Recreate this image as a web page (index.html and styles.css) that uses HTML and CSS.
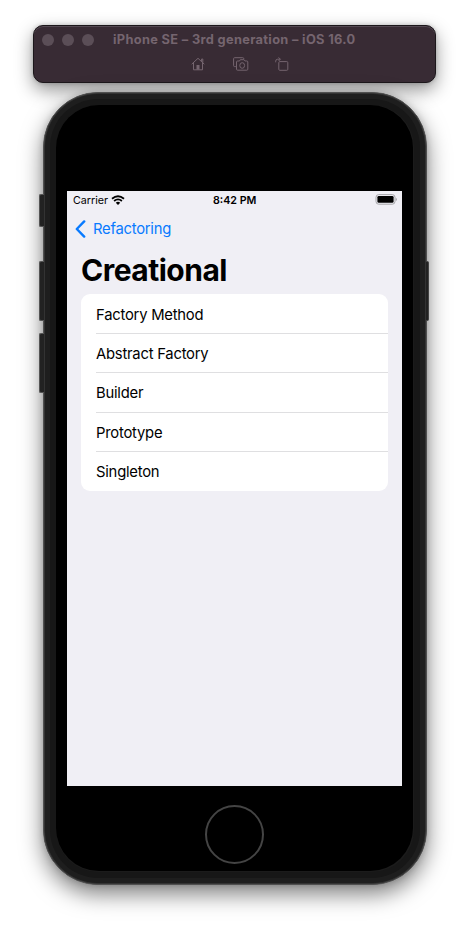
FILE: index.html
```html
<!DOCTYPE html>
<html lang="en">
<head>
<meta charset="utf-8">
<title>iPhone SE – 3rd generation – iOS 16.0</title>
<link rel="stylesheet" href="styles.css">
</head>
<body>
<header class="toolbar">
  <div class="titlebar">
    <div class="lights"><i></i><i></i><i></i></div>
    <span class="window-title">iPhone SE – 3rd generation – iOS 16.0</span>
  </div>
  <div class="actions">
    <svg width="14" height="14" viewBox="0 0 14 14"><path d="M.7 7.2 7 1.3l6.3 5.9M2.5 6v6.8h9V6M10.6 4.5V2h1.2v3.6"/><path class="solid" d="M5.5 8h3v4.7h-3z"/></svg>
    <svg width="16" height="14" viewBox="0 0 16 14"><path d="M2.8 9.6H1.6a1 1 0 0 1-1-1V1.7a1 1 0 0 1 1-1h8.2a1 1 0 0 1 1 1v.5"/><path d="M4.5 4h2l.8-1.3h3.8L12 4h1.8a1 1 0 0 1 1 1v7.2a1 1 0 0 1-1 1H4.5a1 1 0 0 1-1-1V5a1 1 0 0 1 1-1z"/><ellipse cx="9.2" cy="8.5" rx="2.4" ry="2.8"/></svg>
    <svg width="14" height="14" viewBox="0 0 14 14"><rect x="3.8" y="4.6" width="9" height="8.7" rx="1"/><path d="M.7 5.3V4.2a2 2 0 0 1 2-2h2.5M3.6.4l1.8 1.8-1.8 1.8"/></svg>
  </div>
</header>
<main class="phone">
  <b class="key mute"></b><b class="key up"></b><b class="key down"></b><b class="key power"></b>
  <div class="face">
    <section class="screen">
      <div class="status">
        <div class="carrier"><span>Carrier</span>
          <svg width="14" height="10" viewBox="0 0 14 10"><path d="M1 3.7q6-5 12 0M3.1 6q3.9-3.2 7.8 0"/><path class="dot" d="M4.8 7.7q2.2-1.8 4.4 0L7 9.9z"/></svg>
        </div>
        <span class="time">8:42 PM</span>
        <svg class="battery" width="22" height="11" viewBox="0 0 22 11"><rect class="shell" x="1" y=".6" width="19" height="9.6" rx="2.7"/><rect x="2.4" y="2" width="16.2" height="6.8" rx="1.3"/><path class="cap" d="M20.8 3.8q1.1.5 1.1 1.6t-1.1 1.6z"/></svg>
      </div>
      <nav class="back"><svg width="11" height="18" viewBox="0 0 11 18"><path d="M9.2 1.4 1.8 9l7.4 7.6"/></svg><span>Refactoring</span></nav>
      <h1>Creational</h1>
      <ul class="list">
        <li>Factory Method</li>
        <li>Abstract Factory</li>
        <li>Builder</li>
        <li>Prototype</li>
        <li>Singleton</li>
      </ul>
    </section>
    <div class="home"></div>
  </div>
</main>
</body>
</html>
```
FILE: styles.css
```css
* { box-sizing: border-box; }
body {
  margin: 0;
  width: 469px;
  height: 927px;
  padding-top: 25px;
  overflow: hidden;
  background: #fff;
  font-family: Inter, "Liberation Sans", sans-serif;
  color: #000;
}
svg { display: block; fill: none; }
.toolbar {
  width: 403px;
  height: 58px;
  margin-left: 33px;
  border: 1px solid #1c171b;
  border-radius: 10px;
  background: #382b34;
  box-shadow: inset 0 1px 0 #544952, 0 7px 18px rgba(0,0,0,.42), 0 0 4px rgba(0,0,0,.2);
}
.titlebar { display: flex; align-items: center; height: 28px; padding-left: 8px; }
.lights { display: flex; gap: 8px; width: 71px; }
.lights i { width: 12px; height: 12px; border-radius: 50%; background: #5b4e57; }
.window-title { font-size: 12.8px; font-weight: 700; line-height: 16px; color: #75656f; white-space: nowrap; letter-spacing: .34px; }
.actions { display: flex; padding: 3px 0 0 157px; stroke: #75656f; stroke-width: 1; }
.actions svg + svg { margin-left: 28px; }
.actions svg:last-child { margin-left: 26px; }
.actions .solid { fill: #75656f; stroke: none; }
.phone {
  position: relative;
  width: 384px;
  height: 793px;
  margin: 9px 0 0 43px;
  padding: 13px;
  border: 1px solid #505050;
  border-radius: 55px;
  background: #1b1b1b;
  box-shadow: inset 0 0 0 1px #333, inset 0 0 0 6px #1e1e1e, inset 0 0 0 12px #171717, 0 9px 22px rgba(0,0,0,.5), 0 0 6px rgba(0,0,0,.15);
}
.key { position: absolute; left: -5px; width: 5px; border: 1px solid #555; border-right: 0; border-radius: 2px 0 0 2px; background: #222; }
.mute { top: 101px; height: 33px; }
.up { top: 168px; height: 60px; }
.down { top: 240px; height: 60px; }
.power { top: 168px; height: 60px; left: auto; right: -3px; width: 3px; border: 1px solid #444; border-left: 0; border-radius: 0 2px 2px 0; }
.face {
  width: 357px;
  height: 766px;
  margin: -1px 0 0 -1px;
  padding: 86px 0 0 11px;
  border-radius: 43px;
  background: #000;
}
.screen { width: 335px; height: 595px; background: #f0eff5; }
.status { display: flex; align-items: center; justify-content: space-between; height: 18px; padding: 0 5px 0 6px; font-size: 10.7px; line-height: 18px; }
.carrier { display: flex; align-items: center; gap: 3px; width: 140px; }
.carrier span, .time { padding-top: 1px; }
.carrier svg { stroke: #000; stroke-width: 1.8; }
.carrier .dot { fill: #000; stroke: none; }
.time { font-weight: 600; width: 49px; white-space: nowrap; }
.battery { margin-left: 113px; margin-top: -1px; fill: #000; flex: none; }
.battery .shell { fill: none; stroke: #a5a5a9; stroke-width: 1; }
.battery .cap { fill: #a5a5a9; }
.back { display: flex; align-items: center; height: 39px; padding-left: 8px; gap: 7px; color: #087aff; font-size: 14.8px; letter-spacing: -.25px; }
.back svg { stroke: #087aff; stroke-width: 2.4; stroke-linecap: round; stroke-linejoin: round; }
h1 { margin: 0; height: 46px; padding-left: 14px; font-size: 30px; line-height: 44px; font-weight: 700; letter-spacing: -.5px; }
.list { width: 307px; height: 197px; margin: 0 0 0 14px; padding: 1px 0 0 15px; list-style: none; border-radius: 9px; background: #fff; }
.list li { height: 39.2px; line-height: 40.5px; font-size: 14.8px; letter-spacing: -.23px; border-bottom: 1px solid #dfdfe1; }
.list li:last-child { border: 0; }
.home { width: 59px; height: 59px; margin: 19px 0 0 138px; border: 2px solid #444; border-radius: 50%; }
```
